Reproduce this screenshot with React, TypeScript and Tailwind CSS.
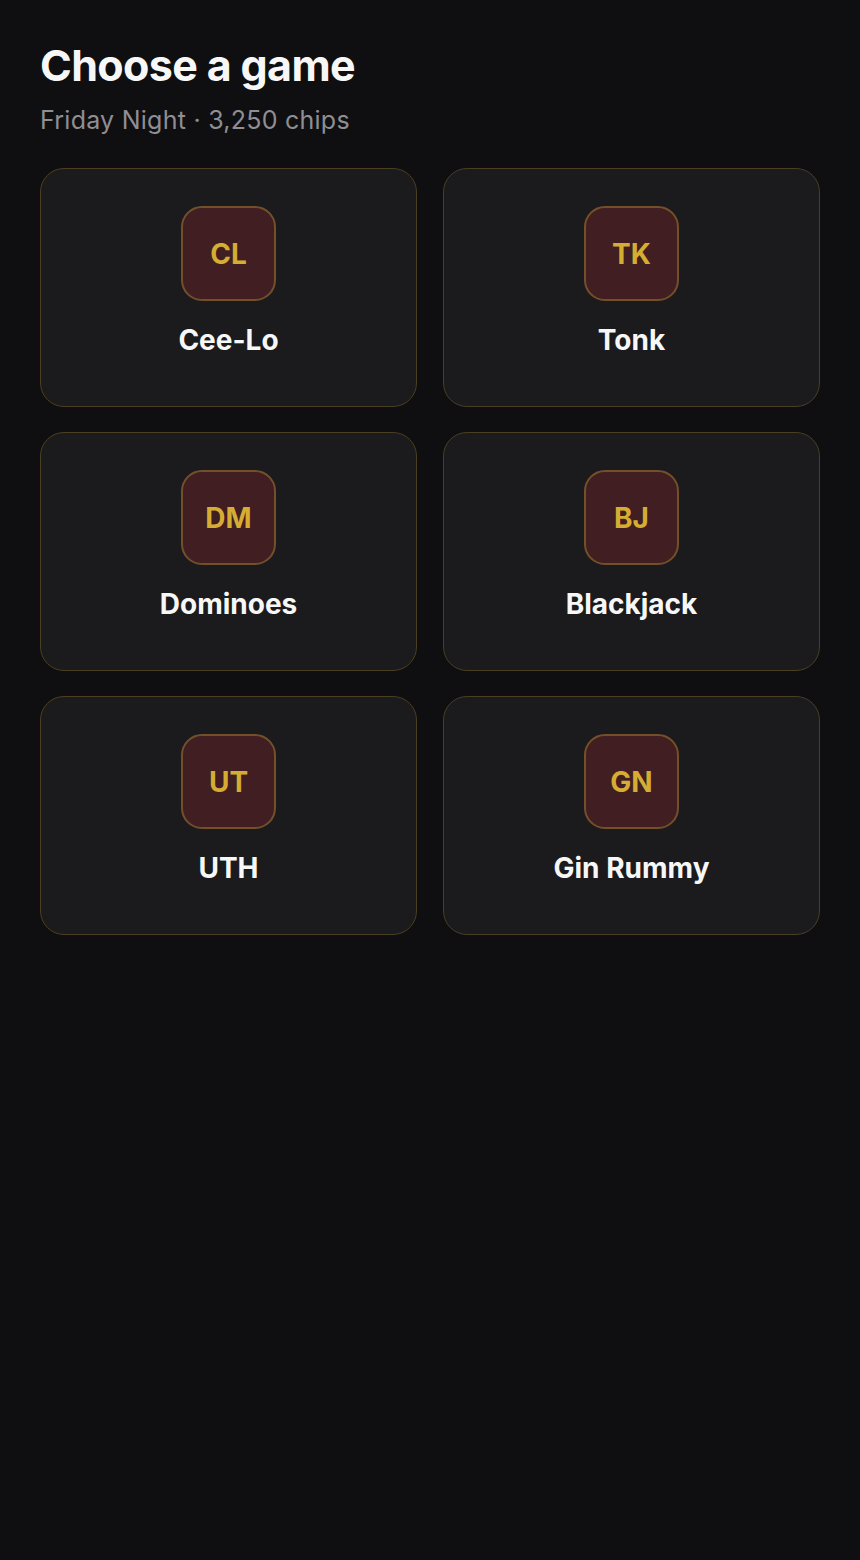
import React from 'react';

const games = [
  { code: 'CL', name: 'Cee-Lo' },
  { code: 'TK', name: 'Tonk' },
  { code: 'DM', name: 'Dominoes' },
  { code: 'BJ', name: 'Blackjack' },
  { code: 'UT', name: 'UTH' },
  { code: 'GN', name: 'Gin Rummy' },
];

const App: React.FC = () => {
  return (
    <div
      className="min-h-screen bg-[#0f0f11] px-10 pt-10"
      style={{ fontFamily: 'Inter, "Noto Sans", sans-serif' }}
    >
      <h1 className="text-[43px] leading-[50px] font-bold tracking-[-0.015em] text-[#f7f7f8]">
        Choose a game
      </h1>
      <p className="mt-[14px] text-[25px] leading-8 tracking-[0.01em] text-[#8e8e93]">
        Friday Night · 3,250 chips
      </p>

      <div className="mt-[32px] grid grid-cols-2 gap-x-[26px] gap-y-[25px]">
        {games.map((g) => (
          <button
            key={g.code}
            className="flex h-[239px] flex-col items-center rounded-[24px] border-[1.5px] border-[#4b3f22] bg-[#1b1b1d] pt-[37px]"
          >
            <div className="flex h-[95px] w-[95px] items-center justify-center rounded-[21px] border-2 border-[#74502a] bg-[#401e22]">
              <span className="text-[28px] font-bold text-[#d6ad33]">{g.code}</span>
            </div>
            <div className="mt-[23px] text-[28px] leading-8 font-bold text-[#f7f7f8]">{g.name}</div>
          </button>
        ))}
      </div>
    </div>
  );
};

export default App;
